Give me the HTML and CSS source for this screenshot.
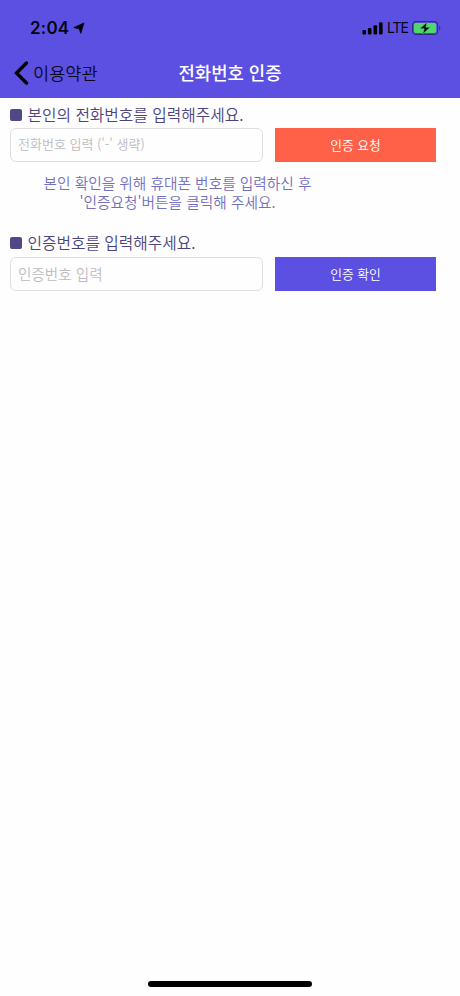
FILE: index.html
```html
<!DOCTYPE html>
<html lang="ko">
<head>
<meta charset="utf-8">
<title>전화번호 인증</title>
<link rel="stylesheet" href="styles.css">
</head>
<body>
<header class="header">
  <div class="status">
    <span class="time">2:04</span>
    <svg class="location" width="13" height="13" viewBox="0 0 13 13"><path d="M11 1 7.8 11.4 6.2 6.8.8 5.6Z" stroke="#050512" stroke-width=".8" stroke-linejoin="round"/></svg>
    <svg class="signal" width="21" height="13" viewBox="0 0 21 13"><rect x=".4" y="8" width="3.6" height="4.5" rx="1"/><rect x="5.9" y="6" width="3.6" height="6.5" rx="1"/><rect x="11.5" y="3.2" width="3.6" height="9.3" rx="1"/><rect x="17" y=".3" width="3.6" height="12.2" rx="1"/></svg>
    <span class="lte">LTE</span>
    <svg class="battery" width="29" height="14" viewBox="0 0 29 14"><rect x=".6" y=".6" width="25" height="12.8" rx="3.5" fill="none" stroke="#302b84" stroke-width="1.1"/><rect x="2" y="2" width="22.2" height="10" rx="2" fill="#4fd76b"/><path d="M27.2 4.8c1.5.8 1.5 3.6 0 4.4Z" fill="#302b84"/><path d="M15.2 1 7.8 7.7h4.4L10.8 13 18.2 6.2h-4.4Z" fill="#080819" stroke="#4fd76b" stroke-width=".5"/></svg>
  </div>
  <nav class="nav">
    <a class="back"><svg class="chevron" width="15" height="24" viewBox="0 0 15 24"><path d="M12.5 2 2.5 12 12.5 22" fill="none" stroke="#000" stroke-width="3.4" stroke-linecap="round" stroke-linejoin="miter"/></svg><span class="back-text">이용약관</span></a>
    <h1 class="title">전화번호 인증</h1>
  </nav>
</header>
<main class="content">
  <h2 class="label"><i class="bullet"></i>본인의 전화번호를 입력해주세요.</h2>
  <div class="row">
    <input class="field phone" placeholder="전화번호 입력 ('-' 생략)">
    <button class="button request">인증 요청</button>
  </div>
  <p class="info">본인 확인을 위해 휴대폰 번호를 입력하신 후<br>'인증요청'버튼을 클릭해 주세요.</p>
  <h2 class="label second"><i class="bullet"></i>인증번호를 입력해주세요.</h2>
  <div class="row">
    <input class="field code" placeholder="인증번호 입력">
    <button class="button confirm">인증 확인</button>
  </div>
</main>
<div class="home"></div>
</body>
</html>
```
FILE: styles.css
```css
* { box-sizing: border-box; }
body {
  margin: 0;
  height: 996px;
  display: flex;
  flex-direction: column;
  background: #fefefe;
  font-family: "Noto Sans CJK KR", sans-serif;
  font-weight: 350;
  overflow: hidden;
}
.header { height: 98px; background: #5c50e3; flex: none; }
.status { height: 49px; display: flex; align-items: center; padding: 7px 19px 0 30px; color: #050512; }
.time { font: 600 17px/20px Inter, sans-serif; width: 39px; letter-spacing: .2px; white-space: nowrap; }
.location { margin-left: 4px; }
.signal { margin-left: auto; }
.lte { font: 400 14px/20px Inter, sans-serif; margin: 0 5px 0 4px; width: 20px; letter-spacing: -1px; white-space: nowrap; }
.nav { height: 49px; display: grid; grid-template-columns: 1fr auto 1fr; align-items: center; padding: 0 14px; }
.back { display: flex; align-items: center; gap: 4px; font-size: 17.6px; line-height: 24px; color: #0b0920; }
.chevron { margin-top: -1px; }
.back-text { margin-top: -2px; }
.title { margin: -3px 0 0; color: #fff; font-size: 17.8px; line-height: 24px; font-weight: 500; }
.content { flex: 1; padding: 3px 24px 0 10px; }
.label { display: flex; align-items: center; gap: 5.5px; margin: 0; height: 27px; font-size: 15.75px; font-weight: 350; line-height: 24px; color: #4c447e; }
.second { padding-bottom: 2px; }
.bullet { width: 12px; height: 12px; margin-top: 1px; border-radius: 2px; background: #51488a; }
.row { display: grid; grid-template-columns: 253px 161px; gap: 12px; height: 35px; align-items: start; }
.field { width: 253px; height: 34px; border: 1px solid #dedee2; border-radius: 6px; padding: 0 7px; background: #fefefe; font-family: inherit; font-weight: 350; }
.field::placeholder { color: #bcbcc0; opacity: 1; }
.phone { font-size: 13px; padding-bottom: 3px; }
.code { font-size: 14.6px; padding-bottom: 2px; }
.button { border: 0; padding: 0; height: 34px; font: 350 12.8px/20px "Noto Sans CJK KR", sans-serif; color: #fff; }
.request { background: #ff6048; }
.confirm { background: #5c50e3; }
.info { width: 335px; margin: 11px 0 19px; text-align: center; font-size: 14.7px; line-height: 18.5px; color: #7470c0; }
.home { flex: none; align-self: center; width: 164px; height: 6px; margin-bottom: 9px; border-radius: 3px; background: #000; }
```
